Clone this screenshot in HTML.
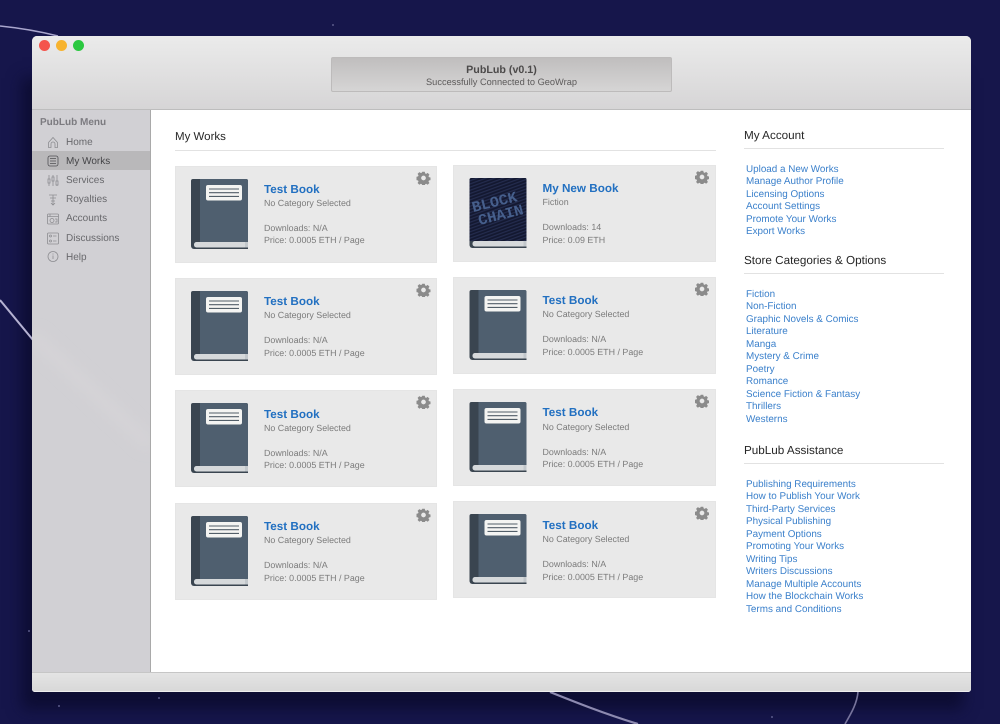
<!DOCTYPE html>
<html><head><meta charset="utf-8"><title>PubLub</title>
<style>
html,body{margin:0;padding:0;width:1000px;height:724px;overflow:hidden;background:#16164c;font-family:"Liberation Sans",Arial,sans-serif;text-rendering:geometricPrecision}
.a{position:absolute;white-space:nowrap}
#bg{position:absolute;left:0;top:0}
#shadow{position:absolute;left:30px;top:80px;width:925px;height:615px;background:#0d0d33;box-shadow:0 6px 14px 8px #0d0d33}
#win{position:absolute;left:32px;top:36px;width:938.5px;height:656px;border-radius:5px 5px 3px 3px;overflow:hidden;background:#fff}
#title{position:absolute;left:32px;top:36px;width:938.5px;height:74px;border-radius:5px 5px 0 0;background:linear-gradient(#ebebeb,#d6d5d6);border-bottom:1px solid #bdbdbd;box-sizing:border-box}
.dot{position:absolute;top:39.5px;width:11px;height:11px;border-radius:50%}
#status{position:absolute;left:331px;top:57px;width:341px;height:35px;box-sizing:border-box;border:1px solid #bdbbbb;border-radius:2px;background:linear-gradient(#c0bebe,#d6d5d5);text-align:center;color:#4c4a4a}
#side{position:absolute;left:32px;top:110px;width:118px;height:562px;background:#d1d0d4}
#sel{position:absolute;left:32px;top:151px;width:118px;height:19px;background:#b9b8ba}
#vline{position:absolute;left:150px;top:110px;width:1px;height:562px;background:#a9a9a9}
#foot{position:absolute;left:32px;top:672px;width:938.5px;height:20px;box-sizing:border-box;border-top:1px solid #c6c6c6;background:linear-gradient(#e4e4e4,#d8d8d8);border-radius:0 0 3px 3px;border-bottom:1px solid #eee}
.m{left:66px;font-size:10px;line-height:12px;color:#68686c;margin-top:1px}
.card{position:absolute;width:262px;height:97px;box-sizing:border-box;background:#e9e9e9;border:1px solid #e5e5e5}
.t{font-size:11.7px;font-weight:bold;color:#2270c1;line-height:14px;margin-top:1px}
.s{font-size:8.9px;color:#7b7b7b;line-height:12px;margin-top:.5px}
.h{left:744px;font-size:11.7px;line-height:14px;color:#262626}
.hr{position:absolute;height:1px;background:#e2e2e2}
.l{left:746px;font-size:9.9px;line-height:12px;color:#3b80cb;margin-top:1px}
</style></head><body>
<svg id="bg" width="1000" height="724" viewBox="0 0 1000 724">
<defs>
<pattern id="tx" width="3" height="3" patternUnits="userSpaceOnUse" patternTransform="rotate(-20)"><rect width="3" height="3" fill="#131830"/><rect width="3" height="1.2" fill="#242c4e"/></pattern>
<symbol id="book" viewBox="0 0 57 71">
<path d="M2 0H55a2 2 0 0 1 2 2V70H3a3 3 0 0 1-3-3V2a2 2 0 0 1 2-2z" fill="#3a4550"/>
<path d="M9 0H55a2 2 0 0 1 2 2V63H9z" fill="#4f5f6f"/>
<rect x="3" y="63" width="54" height="5.500" rx="2.500" fill="#d6d9db"/>
<rect x="54" y="63" width="3" height="5.500" fill="#c2c7cb"/>
<rect x="15" y="6" width="36" height="15.500" rx="2" fill="#f4f4f2"/>
<path d="M18 10h30M18 13.700h30M18 17.400h30" stroke="#525e68" stroke-width="1.100"/>
</symbol>
<symbol id="gear" viewBox="0 0 24 24">
<path fill="#8b8b8b" fill-rule="evenodd" d="M9.600 0h4.800l.7 3.200 2 .85 2.800-1.800 3.400 3.400-1.800 2.800.85 2 3.200.7v4.800l-3.200.7-.85 2 1.800 2.800-3.400 3.400-2.800-1.800-2 .85-.7 3.200H9.600l-.7-3.200-2-.85-2.800 1.800-3.400-3.400 1.800-2.800-.85-2-3.200-.7V9.600l3.200-.7.85-2-1.800-2.800 3.400-3.400 2.800 1.800 2-.85zM12 7.500a4.500 4.500 0 1 0 0 9 4.500 4.500 0 0 0 0-9z" transform="translate(1.200 1.200) scale(.9)"/>
</symbol>
<filter id="bl" x="-20%" y="-20%" width="140%" height="140%"><feGaussianBlur stdDeviation="7"/></filter>
</defs>
<rect width="1000" height="724" fill="#16164b"/>
</svg>
<div id="shadow"></div>
<svg class="a" style="left:0;top:0" width="1000" height="724" viewBox="0 0 1000 724">
<path d="M0 26C20 28 38 31 58 36" stroke="#a9a6cd" stroke-width="1.600" fill="none"/>
<path d="M0 300L33 340" stroke="#b5b2d2" stroke-width="2" fill="none"/>
<path d="M550 692C575 702 605 714 638 724" stroke="#8d8ab0" stroke-width="2.200" fill="none"/>
<path d="M858 692C857 703 852 712 845 724" stroke="#77749c" stroke-width="1.600" fill="none"/>
<g fill="#5a5a8a"><circle cx="333" cy="25" r="1"/><circle cx="59" cy="706" r="1"/><circle cx="159" cy="698" r="1"/><circle cx="772" cy="717" r="1"/><circle cx="29" cy="631" r="1"/></g>
</svg>
<div id="win"></div>
<div id="title"></div>
<div class="dot" style="left:38.500px;background:#f4544c"></div>
<div class="dot" style="left:55.500px;background:#f7b32f"></div>
<div class="dot" style="left:72.500px;background:#2bc840"></div>
<div id="status">
<div style="font-size:10.700px;font-weight:bold;line-height:12px;margin-top:6px">PubLub (v0.1)</div>
<div style="font-size:9.250px;line-height:12px;color:#5d5b5b">Successfully Connected to GeoWrap</div>
</div>
<div id="side"></div>
<svg class="a" style="left:32px;top:230px;overflow:hidden" width="118" height="300" viewBox="0 0 118 300"><path d="M0 105L118 215" stroke="#d7d5d8" stroke-width="9" filter="url(#bl)" fill="none"/></svg>
<div id="sel"></div><div id="vline"></div><div id="foot"></div>

<div class="a" style="left:40px;top:117px;font-size:10px;font-weight:bold;line-height:12px;color:#7c7b80">PubLub Menu</div>
<div class="a m" style="top:136px">Home</div>
<div class="a m" style="top:155px;color:#454548">My Works</div>
<div class="a m" style="top:174px">Services</div>
<div class="a m" style="top:193px">Royalties</div>
<div class="a m" style="top:212px">Accounts</div>
<div class="a m" style="top:232px">Discussions</div>
<div class="a m" style="top:251px">Help</div>

<svg class="a" style="left:44.500px;top:134px" width="16" height="132" viewBox="0 0 16 132" fill="none" stroke="#8d8d91" stroke-width=".8">
<path d="M3.500 8.500L8 3.500l4.500 5v5H10V10a2 2 0 0 0-4 0v3.500H3.500z"/>
<rect x="3" y="22" width="10" height="10" rx="2" stroke="#505054"/><path d="M5 24.500h6M5 27h6M5 29.500h6" stroke="#505054"/>
<path d="M4 41v4M4 49v3M8 41v2M8 47v5M12 41v6M12 51v1"/><rect x="3" y="45" width="2" height="4"/><rect x="7" y="43" width="2" height="4"/><rect x="11" y="47" width="2" height="4"/>
<path d="M4 61h8M5 64h6M6 67h4M8 61v10M6 69l2 2 2-2"/>
<rect x="2.500" y="80" width="11" height="10" rx="1"/><path d="M2.500 82.500h11M5 80v2.500"/><circle cx="7" cy="86.500" r="2"/><path d="M10 85h2v3h-2"/>
<rect x="2.500" y="99" width="11" height="11" rx="1"/><circle cx="5.500" cy="102" r="1"/><circle cx="5.500" cy="107" r="1"/><path d="M8 102h3.500M8 107h3.500"/>
<circle cx="8" cy="122.500" r="5"/><path d="M8 121.500v3.500M8 119.500v1"/>
</svg>

<div class="a" style="left:175px;top:130px;font-size:11.500px;line-height:14px;color:#262626">My Works</div>
<div class="hr" style="left:175px;top:149.500px;width:541px"></div>

<div class="card" style="left:175px;top:166px"></div>
<div class="card" style="left:175px;top:278px"></div>
<div class="card" style="left:175px;top:390px"></div>
<div class="card" style="left:175px;top:503px"></div>
<div class="card" style="left:453px;top:165px;width:263px"></div>
<div class="card" style="left:453px;top:277px;width:263px"></div>
<div class="card" style="left:453px;top:389px;width:263px"></div>
<div class="card" style="left:453px;top:501px;width:263px"></div>

<svg class="a" style="left:0;top:0" width="1000" height="724" viewBox="0 0 1000 724">
<use href="#book" x="191" y="179" width="57" height="71"/>
<use href="#book" x="191" y="291" width="57" height="71"/>
<use href="#book" x="191" y="403" width="57" height="71"/>
<use href="#book" x="191" y="516" width="57" height="71"/>
<use href="#book" x="469.500" y="178" width="57" height="71"/>
<use href="#book" x="469.500" y="290" width="57" height="71"/>
<use href="#book" x="469.500" y="402" width="57" height="71"/>
<use href="#book" x="469.500" y="514" width="57" height="71"/>
<path d="M471.500 178H525a1.500 1.500 0 0 1 1.500 1.500V241H469.500V180a2 2 0 0 1 2-2z" fill="url(#tx)"/>
<g transform="rotate(-14 498 208)" font-family="Liberation Mono,monospace" font-weight="bold" fill="#465f8c" text-anchor="middle" font-size="15">
<text x="496" y="206" textLength="46" lengthAdjust="spacingAndGlyphs">BLOCK</text>
<text x="499" y="220" textLength="46" lengthAdjust="spacingAndGlyphs">CHAIN</text>
</g>
<use href="#gear" x="416.500" y="171" width="14" height="14"/>
<use href="#gear" x="416.500" y="283" width="14" height="14"/>
<use href="#gear" x="416.500" y="395" width="14" height="14"/>
<use href="#gear" x="416.500" y="508" width="14" height="14"/>
<use href="#gear" x="695" y="170" width="14" height="14"/>
<use href="#gear" x="695" y="282" width="14" height="14"/>
<use href="#gear" x="695" y="394" width="14" height="14"/>
<use href="#gear" x="695" y="506" width="14" height="14"/>
</svg>

<div class="a t" style="left:264px;top:182px">Test Book</div>
<div class="a s" style="left:264px;top:196px">No Category Selected</div>
<div class="a s" style="left:264px;top:221px">Downloads: N/A</div>
<div class="a s" style="left:264px;top:233px">Price: 0.0005 ETH / Page</div>

<div class="a t" style="left:264px;top:294px">Test Book</div>
<div class="a s" style="left:264px;top:308px">No Category Selected</div>
<div class="a s" style="left:264px;top:333px">Downloads: N/A</div>
<div class="a s" style="left:264px;top:346px">Price: 0.0005 ETH / Page</div>

<div class="a t" style="left:264px;top:407px">Test Book</div>
<div class="a s" style="left:264px;top:421px">No Category Selected</div>
<div class="a s" style="left:264px;top:446px">Downloads: N/A</div>
<div class="a s" style="left:264px;top:458px">Price: 0.0005 ETH / Page</div>

<div class="a t" style="left:264px;top:519px">Test Book</div>
<div class="a s" style="left:264px;top:533px">No Category Selected</div>
<div class="a s" style="left:264px;top:558px">Downloads: N/A</div>
<div class="a s" style="left:264px;top:571px">Price: 0.0005 ETH / Page</div>

<div class="a t" style="left:542.500px;top:181px">My New Book</div>
<div class="a s" style="left:542.500px;top:195px">Fiction</div>
<div class="a s" style="left:542.500px;top:220px">Downloads: 14</div>
<div class="a s" style="left:542.500px;top:233px">Price: 0.09 ETH</div>

<div class="a t" style="left:542.500px;top:293px">Test Book</div>
<div class="a s" style="left:542.500px;top:307px">No Category Selected</div>
<div class="a s" style="left:542.500px;top:332px">Downloads: N/A</div>
<div class="a s" style="left:542.500px;top:345px">Price: 0.0005 ETH / Page</div>

<div class="a t" style="left:542.500px;top:405px">Test Book</div>
<div class="a s" style="left:542.500px;top:420px">No Category Selected</div>
<div class="a s" style="left:542.500px;top:445px">Downloads: N/A</div>
<div class="a s" style="left:542.500px;top:457px">Price: 0.0005 ETH / Page</div>

<div class="a t" style="left:542.500px;top:518px">Test Book</div>
<div class="a s" style="left:542.500px;top:532px">No Category Selected</div>
<div class="a s" style="left:542.500px;top:557px">Downloads: N/A</div>
<div class="a s" style="left:542.500px;top:570px">Price: 0.0005 ETH / Page</div>

<div class="a h" style="top:129px">My Account</div>
<div class="hr" style="left:744px;top:148px;width:200px"></div>
<div class="a l" style="top:163px">Upload a New Works</div>
<div class="a l" style="top:175px">Manage Author Profile</div>
<div class="a l" style="top:188px">Licensing Options</div>
<div class="a l" style="top:200px">Account Settings</div>
<div class="a l" style="top:213px">Promote Your Works</div>
<div class="a l" style="top:225px">Export Works</div>

<div class="a h" style="top:254px">Store Categories &amp; Options</div>
<div class="hr" style="left:744px;top:273px;width:200px"></div>
<div class="a l" style="top:288px">Fiction</div>
<div class="a l" style="top:300px">Non-Fiction</div>
<div class="a l" style="top:313px">Graphic Novels &amp; Comics</div>
<div class="a l" style="top:325px">Literature</div>
<div class="a l" style="top:338px">Manga</div>
<div class="a l" style="top:350px">Mystery &amp; Crime</div>
<div class="a l" style="top:363px">Poetry</div>
<div class="a l" style="top:375px">Romance</div>
<div class="a l" style="top:388px">Science Fiction &amp; Fantasy</div>
<div class="a l" style="top:400px">Thrillers</div>
<div class="a l" style="top:413px">Westerns</div>

<div class="a h" style="top:444px">PubLub Assistance</div>
<div class="hr" style="left:744px;top:463px;width:200px"></div>
<div class="a l" style="top:478px">Publishing Requirements</div>
<div class="a l" style="top:490px">How to Publish Your Work</div>
<div class="a l" style="top:503px">Third-Party Services</div>
<div class="a l" style="top:515px">Physical Publishing</div>
<div class="a l" style="top:528px">Payment Options</div>
<div class="a l" style="top:540px">Promoting Your Works</div>
<div class="a l" style="top:553px">Writing Tips</div>
<div class="a l" style="top:565px">Writers Discussions</div>
<div class="a l" style="top:578px">Manage Multiple Accounts</div>
<div class="a l" style="top:590px">How the Blockchain Works</div>
<div class="a l" style="top:603px">Terms and Conditions</div>
</body></html>
